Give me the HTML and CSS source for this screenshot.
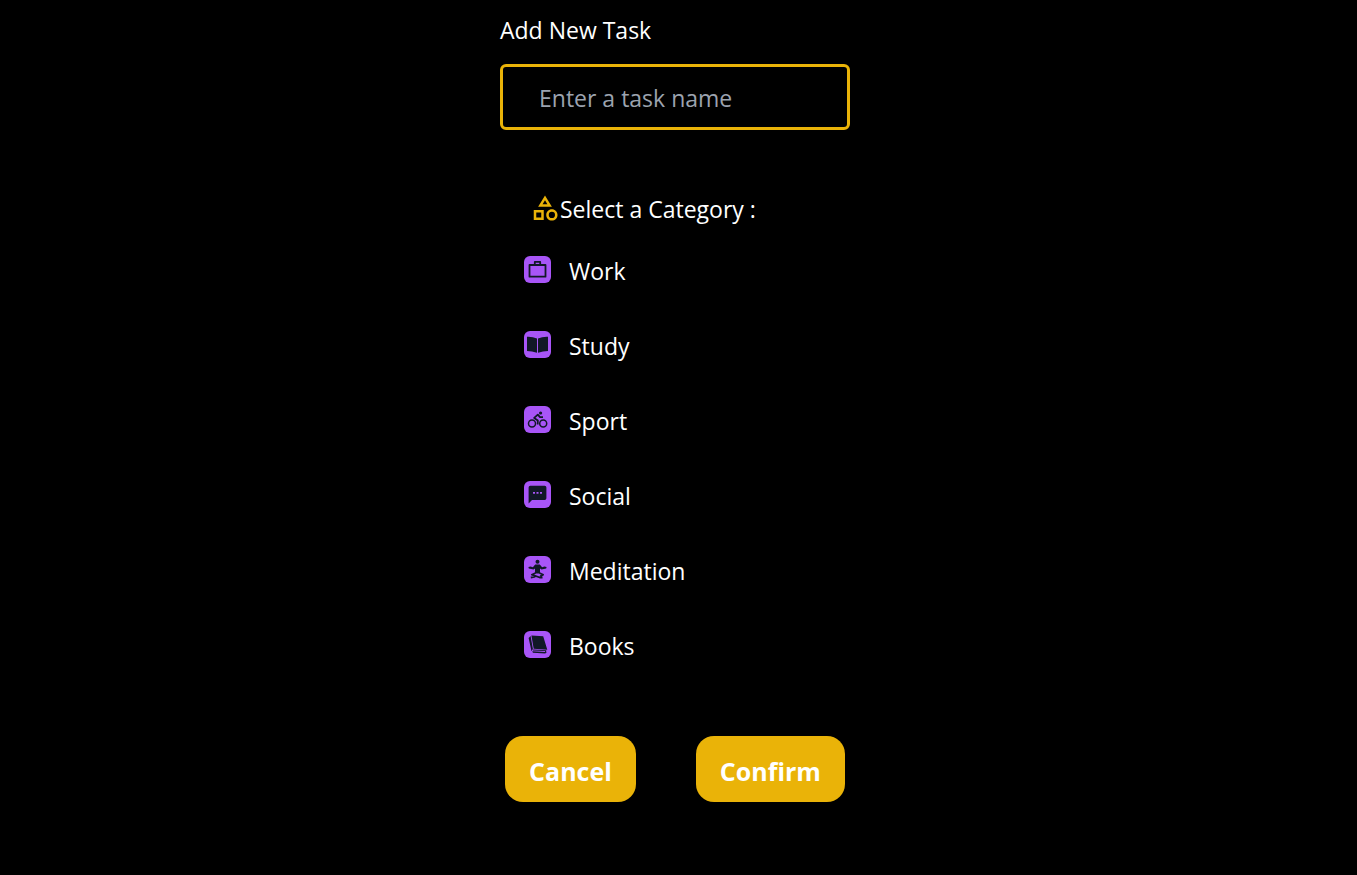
FILE: index.html
```html
<!DOCTYPE html>
<html lang="en">
<head>
<meta charset="utf-8">
<meta name="viewport" content="width=device-width, initial-scale=1">
<title>Add New Task</title>
<link rel="stylesheet" href="styles.css">
</head>
<body>
<main class="page">
  <form class="task-form">
    <label class="title" for="task-name">Add New Task</label>
    <input class="task-input" id="task-name" type="text" placeholder="Enter a task name">
    <section class="categories" aria-labelledby="category-title">
      <h2 class="category-title" id="category-title">
        <svg class="category-mark" viewBox="0 0 24 24" aria-hidden="true"><path d="m12 2-5.500 9h11L12 2zm0 3.840L13.930 9h-3.870L12 5.840zM17.500 13c-2.490 0-4.500 2.010-4.500 4.500s2.010 4.500 4.500 4.500 4.500-2.010 4.500-4.500-2.010-4.500-4.500-4.500zm0 7a2.500 2.500 0 0 1 0-5 2.500 2.500 0 0 1 0 5zM3 21.500h8v-8H3v8zm2-6h4v4H5v-4z"/></svg>
        <span>Select a Category :</span>
      </h2>
      <ul class="category-list">
        <li><button class="category" type="button">
          <svg class="icon" viewBox="0 0 27 27" aria-hidden="true"><path class="line" d="M5.500 9h16v11.700h-16zM10.800 9V5.800h5.400V9"/></svg>
          <span>Work</span></button></li>
        <li><button class="category" type="button">
          <svg class="icon" viewBox="0 0 27 27" aria-hidden="true"><path d="M3 5.700Q8.500 5.400 13 7.500v14.300Q8 20 3 19.900zM24 5.700Q18.500 5.400 14 7.500v14.300q5-1.800 10-1.900z"/></svg>
          <span>Study</span></button></li>
        <li><button class="category" type="button">
          <svg class="icon" viewBox="0 0 27 27" aria-hidden="true"><circle class="thin" cx="8" cy="17.500" r="3.500"/><circle class="thin" cx="19.200" cy="17.500" r="3.500"/><circle cx="16.600" cy="7" r="1.600"/><path class="line" d="m13.700 18.500.1-4-3.600-2.600 3.600-3.200 2.200 2.500H19"/></svg>
          <span>Sport</span></button></li>
        <li><button class="category" type="button">
          <svg class="icon" viewBox="0 0 27 27" aria-hidden="true"><path d="M6.300 4.800h14.400q1.700 0 1.700 1.700v10.800q0 1.700-1.700 1.700H8l-3.400 3.400V6.500q0-1.700 1.700-1.700z"/><path class="dots" d="M9 11h2v1.800H9zm3.500 0h2v1.800h-2zm3.500 0h2v1.800h-2z"/></svg>
          <span>Social</span></button></li>
        <li><button class="category" type="button">
          <svg class="icon" viewBox="0 0 27 27" aria-hidden="true"><circle cx="13.500" cy="5.800" r="2"/><path d="M11.200 8.500h4.600l2.300 2.700 2.300-.7 2.200.4-.4 1.500-4.700 1-1.500-1v5h-5v-5l-1.500 1-4.700-1-.4-1.500 2.200-.4 2.300.7z"/><path class="line" d="m11.500 17-3.700 1.700 8 2.800m-.3-4.500 3.700 1.700-3 1.600M6.800 21.500l4.500-.8M15.500 21.500h3"/></svg>
          <span>Meditation</span></button></li>
        <li><button class="category" type="button">
          <svg class="icon" viewBox="0 0 27 27" aria-hidden="true"><path d="m7.400 4.400 11.800.9 4.100 13.500-13.600-1zM6.600 4.900l2.300 13.200-1.400 2.100L4.600 7.100z"/><path d="m9.200 18.500 13.400.8-.7.700-13-.5zM8.300 20.300l13 .8.300 1.500-12.700-.9zM22 19.800l.5 2-1.100.3-.4-2z"/></svg>
          <span>Books</span></button></li>
      </ul>
    </section>
    <div class="actions">
      <button class="action" type="button">Cancel</button>
      <button class="action" type="submit">Confirm</button>
    </div>
  </form>
</main>
</body>
</html>
```
FILE: styles.css
```css
* {
  box-sizing: border-box;
}

body {
  margin: 0;
  background: #000;
  color: #fff;
  font-family: "Segoe UI", "Open Sans", "Noto Sans", sans-serif;
  font-size: 23px;
  line-height: 36px;
}

button,
input {
  font: inherit;
  color: inherit;
}

.page {
  display: flex;
  justify-content: center;
  padding: 12px 23px 24px 16px;
}

.task-form {
  display: flex;
  flex-direction: column;
  width: 100%;
  max-width: 350px;
}

.task-input {
  width: 100%;
  margin-top: 16px;
  padding: 13px 36px 11px;
  border: 3px solid #eab308;
  border-radius: 6px;
  background: #000;
}

.task-input::placeholder {
  color: #9ca3af;
  opacity: 1;
}

.categories {
  padding: 61px 24px 0;
}

.category-title {
  display: flex;
  align-items: center;
  margin: 0;
  padding-left: 6px;
  font-size: 23px;
  font-weight: 400;
}

.category-mark {
  width: 30px;
  height: 30px;
  margin-bottom: 2px;
  fill: #eab308;
}

.category-list {
  display: flex;
  flex-direction: column;
  gap: 39px;
  margin: 0;
  padding: 26px 0 0;
  list-style: none;
}

.category {
  display: flex;
  align-items: center;
  gap: 18px;
  width: 100%;
  padding: 0;
  border: 0;
  background: none;
  text-align: left;
  cursor: pointer;
}

.icon {
  width: 27px;
  height: 27px;
  margin-bottom: 4px;
  border-radius: 6px;
  background: #a855f7;
  fill: #111827;
}

.icon .line,
.icon .thin {
  fill: none;
  stroke: #111827;
  stroke-width: 1.8;
  stroke-linejoin: round;
}

.icon .thin {
  stroke-width: 1.5;
}

.icon .dots {
  fill: #a855f7;
}

.actions {
  display: flex;
  justify-content: center;
  gap: 60px;
  padding-top: 72px;
}

.action {
  padding: 17px 24px 13px;
  border: 0;
  border-radius: 18px;
  background: #eab308;
  font-size: 25px;
  font-weight: 700;
  cursor: pointer;
}
```
